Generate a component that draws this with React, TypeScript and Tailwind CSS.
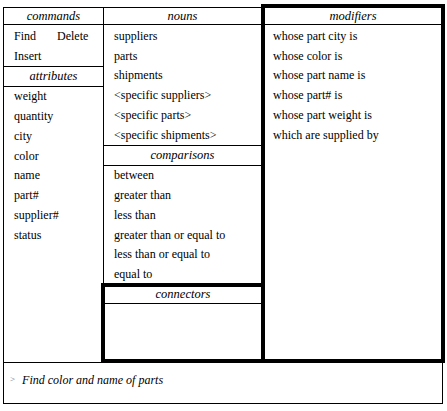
import React from 'react'

const serif = { fontFamily: '"Liberation Serif", "Times New Roman", serif' }

const nouns = [
  'suppliers',
  'parts',
  'shipments',
  '<specific suppliers>',
  '<specific parts>',
  '<specific shipments>',
]

const attributes = ['weight', 'quantity', 'city', 'color', 'name', 'part#', 'supplier#', 'status']

const comparisons = [
  'between',
  'greater than',
  'less than',
  'greater than or equal to',
  'less than or equal to',
  'equal to',
]

const modifiers = [
  'whose part city is',
  'whose color is',
  'whose part name is',
  'whose part# is',
  'whose part weight is',
  'which are supplied by',
]

function Header({ label, tall = false }: { label: string; tall?: boolean }) {
  return (
    <div
      className={
        'flex items-center justify-center border-b border-black italic text-[12.5px] ' +
        (tall ? 'h-[20px]' : 'h-[17px]')
      }
    >
      {label}
    </div>
  )
}

function Item({ text, pl = 'pl-[10px]' }: { text: string; pl?: string }) {
  return <div className={'flex h-[19.75px] items-center whitespace-nowrap ' + pl}>{text}</div>
}

export default function App() {
  return (
    <div className="h-[411px] w-[447px] bg-white pl-[3px] pt-[4px] text-[12px] text-black" style={serif}>
      <div className="flex h-[359px] w-[442px]">
        {/* left column */}
        <div className="mt-[3px] flex w-[100px] flex-col border-b border-l border-t border-black">
          <Header label="commands" />
          <div className="pt-[1px]">
            <div className="flex h-[19.75px] items-center pl-[10px]">
              <span>Find</span>
              <span className="ml-[21px]">Delete</span>
            </div>
            <Item text="Insert" />
          </div>
          <div className="border-t border-black">
            <Header label="attributes" tall />
          </div>
          <div>
            {attributes.map((a) => (
              <Item key={a} text={a} />
            ))}
          </div>
        </div>

        {/* middle column */}
        <div className="mt-[3px] flex w-[158px] flex-col border-l border-t border-black">
          <Header label="nouns" />
          <div className="pt-[1px]">
            {nouns.map((n) => (
              <Item key={n} text={n} />
            ))}
          </div>
          <div className="border-t border-black">
            <Header label="comparisons" tall />
          </div>
          <div className="h-[117px]">
            {comparisons.map((c) => (
              <Item key={c} text={c} />
            ))}
          </div>
          <div className="-ml-[3px] flex w-[160px] flex-1 flex-col border-b-4 border-l-4 border-t-4 border-black">
            <Header label="connectors" />
          </div>
        </div>

        {/* modifiers */}
        <div className="flex w-[184px] flex-col border-4 border-black">
          <Header label="modifiers" />
          <div className="pt-[1px]">
            {modifiers.map((m) => (
              <Item key={m} text={m} pl="pl-[8px]" />
            ))}
          </div>
        </div>
      </div>

      {/* command line */}
      <div className="flex h-[41px] w-[440px] items-center border-b border-l border-r border-black pb-[6px]">
        <span className="ml-[6px] text-[9px] text-gray-500">&gt;</span>
        <span className="ml-[7px] italic">Find color and name of parts</span>
      </div>
    </div>
  )
}
